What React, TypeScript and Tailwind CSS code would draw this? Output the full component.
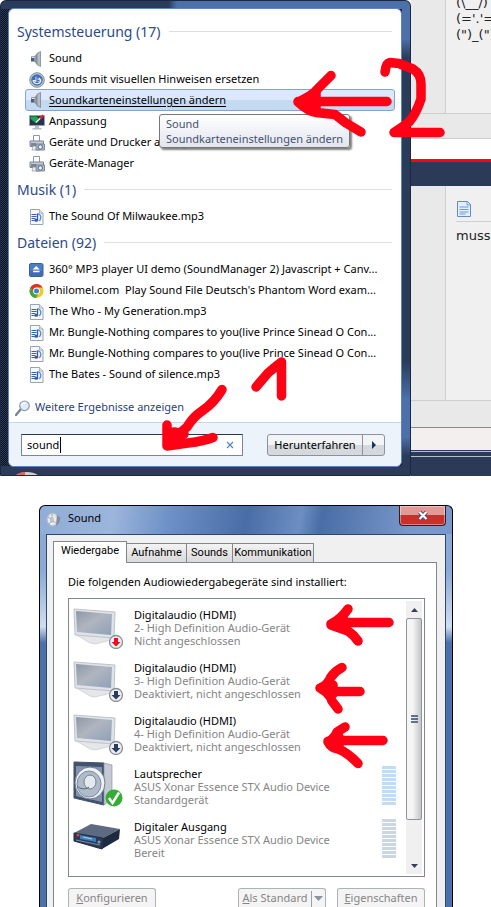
import type { ReactNode } from 'react';

type ResultIcon = 'speaker' | 'clock' | 'monitor' | 'printer' | 'audio' | 'shockwave' | 'chrome';

interface Result {
  icon: ResultIcon;
  label: string;
  selected?: boolean;
}

const sections: { title: string; items: Result[] }[] = [
  {
    title: 'Systemsteuerung (17)',
    items: [
      { icon: 'speaker', label: 'Sound' },
      { icon: 'clock', label: 'Sounds mit visuellen Hinweisen ersetzen' },
      { icon: 'speaker', label: 'Soundkarteneinstellungen ändern', selected: true },
      { icon: 'monitor', label: 'Anpassung' },
      { icon: 'printer', label: 'Geräte und Drucker anzeigen' },
      { icon: 'printer', label: 'Geräte-Manager' },
    ],
  },
  {
    title: 'Musik (1)',
    items: [{ icon: 'audio', label: 'The Sound Of Milwaukee.mp3' }],
  },
  {
    title: 'Dateien (92)',
    items: [
      { icon: 'shockwave', label: '360° MP3 player UI demo (SoundManager 2) Javascript + Canv...' },
      { icon: 'chrome', label: "Philomel.com  Play Sound File Deutsch's Phantom Word exam..." },
      { icon: 'audio', label: 'The Who - My Generation.mp3' },
      { icon: 'audio', label: 'Mr. Bungle-Nothing compares to you(live Prince Sinead O Con...' },
      { icon: 'audio', label: 'Mr. Bungle-Nothing compares to you(live Prince Sinead O Con...' },
      { icon: 'audio', label: 'The Bates - Sound of silence.mp3' },
    ],
  },
];

const devices = [
  { icon: 'tv', badge: 'unplugged', name: 'Digitalaudio (HDMI)', driver: '2- High Definition Audio-Gerät', state: 'Nicht angeschlossen' },
  { icon: 'tv', badge: 'disabled', name: 'Digitalaudio (HDMI)', driver: '3- High Definition Audio-Gerät', state: 'Deaktiviert, nicht angeschlossen' },
  { icon: 'tv', badge: 'disabled', name: 'Digitalaudio (HDMI)', driver: '4- High Definition Audio-Gerät', state: 'Deaktiviert, nicht angeschlossen' },
  { icon: 'box', badge: 'default', name: 'Lautsprecher', driver: 'ASUS Xonar Essence STX Audio Device', state: 'Standardgerät', meter: 'bg-[#c3dbf3]' },
  { icon: 'amp', badge: '', name: 'Digitaler Ausgang', driver: 'ASUS Xonar Essence STX Audio Device', state: 'Bereit', meter: 'bg-[#cad8e6]' },
];

const icons: Record<ResultIcon, ReactNode> = {
  speaker: (
    <>
      <path d="M2 5.500h4v5H2z" fill="#4d5d75" />
      <path d="M5 5.500 9 1.500v13l-4-4z" fill="#8f9aa8" />
      <path d="M8 2.500 11.500.5v15L8 13.500z" fill="#b4bcc6" stroke="#717c89" strokeWidth=".7" />
      <path d="M2.500 6.500h3" stroke="#dfe4ea" />
    </>
  ),
  clock: (
    <>
      <circle cx="8" cy="8" r="7.300" fill="#c5cbd4" stroke="#76818f" strokeWidth=".9" />
      <circle cx="8" cy="8" r="5.800" fill="#3f6fb6" />
      <path d="M3.500 8h3V5l1.500-1 1 3 1.500-1.500L12.500 8c0 2.800-2 4.300-4.500 4.300S3.500 10.800 3.500 8z" fill="#e6f0fc" />
      <path d="M8 4v5l2.500-1" stroke="#3465ae" strokeWidth="1.200" fill="none" />
      <path d="M5.500 9.500c1.500 1.500 3.500 1.500 5 0" stroke="#3465ae" fill="none" />
    </>
  ),
  monitor: (
    <>
      <path d="M.5 1.500h15v10H.5z" fill="#27344d" stroke="#98a2b3" />
      <path d="M1.500 2.500h6l3 3-4 3.500-5-4z" fill="#19a84c" />
      <path d="M7 8.500 13.500 2" stroke="#e8edf3" strokeWidth="1.500" />
      <path d="m11 4 3.500-2.500" stroke="#e02020" strokeWidth="2.200" />
      <path d="M6 12h4v2h2.500v1.500h-9V14H6z" fill="#b5bcc6" />
    </>
  ),
  printer: (
    <>
      <path d="M4.500.5h6v6h-6z" fill="#fff" stroke="#8e97a3" />
      <path d="M1 6h13.500v5.500H1z" fill="#c3c9d1" stroke="#7d8793" />
      <path d="M2 8h5v3H2z" fill="#7c8694" />
      <path d="M4 11h7v4H3z" fill="#eef2f7" stroke="#8e97a3" strokeWidth=".7" />
      <path d="M7 9h8.500v6H7z" fill="#b4bcc6" stroke="#6b7583" strokeWidth=".8" />
      <circle cx="11.300" cy="12" r="2.200" fill="#eaf3ff" stroke="#4c6791" />
    </>
  ),
  audio: (
    <>
      <path d="M1.500.5h9l3.500 3.500v11.500H1.500z" fill="#f5f8fc" stroke="#9aa3ae" />
      <path d="M10.500.5v3.500H14" fill="#dfe5ec" stroke="#9aa3ae" strokeWidth=".8" />
      <path d="M2.500 5.500h5M2.500 7.500h5M2.500 9.500h4M2.500 11.500h3" stroke="#3565ad" />
      <path d="M8.500 4.500v6.500" stroke="#2f5ea8" strokeWidth="1.300" />
      <ellipse cx="7.200" cy="11.300" rx="1.900" ry="1.500" fill="#2f5ea8" />
      <path d="M9 4.500c3.500 1.500 3.500 4.500 1.500 7.500" stroke="#5687c8" strokeWidth="1.300" fill="none" />
    </>
  ),
  shockwave: (
    <>
      <rect x=".5" y="1.500" width="13.500" height="13" rx="1.500" fill="#4d7dc4" stroke="#3a5f9c" />
      <path d="M1.500 9h11.500v5H1.500z" fill="#3f6bb0" />
      <path d="m7.200 4 3.500 3.500h-7z" fill="#fff" />
      <path d="M4 9.500h6.500" stroke="#fff" strokeWidth="1.500" />
    </>
  ),
  chrome: (
    <>
      <circle cx="7.500" cy="8" r="7" fill="#f7c91f" />
      <path d="M1.400 4.500A7 7 0 0 1 13.600 4.500H7.500L4.500 9.500z" fill="#dd3324" />
      <path d="M1.400 4.500A7 7 0 0 0 7 15l3-5.500-5.500 0z" fill="#3fa648" />
      <circle cx="7.500" cy="8" r="3.400" fill="#fff" />
      <circle cx="7.500" cy="8" r="2.500" fill="#3f7fd6" />
    </>
  ),
};

function SectionTitle({ children }: { children: ReactNode }) {
  return (
    <div className="flex h-8 items-center gap-2 pr-[9px] pb-0.5 pl-2">
      <h2 className="text-[14px] whitespace-nowrap text-[#2c4a86]">{children}</h2>
      <div className="h-px flex-1 bg-[#dedede]" />
    </div>
  );
}

function ResultRow({ item }: { item: Result }) {
  return (
    <a
      href="#"
      className={
        item.selected
          ? '-mt-px mr-1.5 ml-4 flex h-[22px] items-center gap-1 rounded-[3px] border border-[#84a3d4] bg-linear-to-b from-[#dce9fc] from-50% to-[#c4daf3] to-50% px-[3px] text-[11px] whitespace-pre text-black underline underline-offset-2'
          : 'mr-1.5 ml-[17px] flex h-[21px] items-center gap-1 px-[3px] text-[11px] whitespace-pre text-black'
      }
    >
      <svg className="h-4 w-4 shrink-0" viewBox="0 0 16 16">{icons[item.icon]}</svg>
      {item.label}
    </a>
  );
}

function StartMenu() {
  return (
    <div className="relative w-[411px] shrink-0 rounded-t-md border border-[#1b2743] pt-[7px] pr-2 pb-2 pl-[7px] [background:linear-gradient(#4b70aa_8%,#2b3b5a_12%,#2b3b5a_76%,#4b70aa_84%,#4b70aa_92%,#2b3b5a_96%)_right/8px_100%_no-repeat,linear-gradient(90deg,#2b3b5a_41%,#4b70aa_43%)_top/100%_8px_no-repeat,linear-gradient(#2b3b5a,#2b3b5a)_bottom/100%_9px_no-repeat,repeating-conic-gradient(#0b101c_0_25%,#2b3b5a_0_50%)_left/2px_2px]">
      <div className="overflow-hidden rounded-md border border-[#5f84bf] bg-white">
        <div className="pt-[7px]">
          {sections.map((section) => (
            <section key={section.title}>
              <SectionTitle>{section.title}</SectionTitle>
              {section.items.map((item, i) => (
                <ResultRow key={i} item={item} />
              ))}
            </section>
          ))}
          <a href="#" className="flex h-[37px] items-center gap-1 pt-2 pl-[6px] text-[11px] text-[#1f3f7d]">
            <svg className="h-4 w-4" viewBox="0 0 16 16">
              <path d="m1 15 5-6" stroke="#77828f" strokeWidth="2.200" strokeLinecap="round" />
              <circle cx="9.500" cy="5.800" r="4.800" fill="#dcecfb" stroke="#8b98a8" strokeWidth="1.200" />
              <path d="M6.500 5.500c.5-2 2-2.500 3.500-2.500" stroke="#fff" strokeWidth="1.300" fill="none" />
            </svg>
            Weitere Ergebnisse anzeigen
          </a>
        </div>
        <div className="flex items-center justify-between border-t border-[#c3d8e4] bg-[#edf3fb] pt-[11px] pr-4 pb-[10px] pl-3">
          <label className="flex h-[22px] w-[222px] items-center border border-[#7e8694] border-t-[#2c3650] bg-white pr-2 pl-[5px]">
            <input aria-label="Programme/Dateien durchsuchen" defaultValue="sound" className="w-full min-w-0 text-[11px] text-black outline-none" />
            <button aria-label="Suche löschen" className="shrink-0">
              <svg className="h-2 w-2" viewBox="0 0 8 8">
                <path d="m1 1 6 6M7 1 1 7" stroke="#5484bd" strokeWidth="1.200" />
              </svg>
            </button>
          </label>
          <div className="flex h-[22px] w-[118px] overflow-hidden rounded-[3px] border border-[#8c929b] bg-linear-to-b from-[#f3f4f6] from-50% to-[#d5d8dd] to-50% text-[11px] text-black">
            <button className="flex-1 border-r border-[#8c929b]">Herunterfahren</button>
            <button aria-label="Weitere Optionen" className="flex w-[21px] items-center justify-center">
              <svg className="h-2 w-1" viewBox="0 0 4 8">
                <path d="M0 0v8l4-4z" fill="#1d2f52" />
              </svg>
            </button>
          </div>
        </div>
      </div>

      {/* text caret behind the typed term */}
      <div className="absolute top-[436px] left-[59px] h-4 w-px bg-black" />

      <div role="tooltip" className="absolute top-[113px] left-[158px] w-[191px] rounded-[3px] border border-[#767676] bg-linear-to-b from-white to-[#e3e5ef] px-1.5 py-px text-[11px] leading-[15px] whitespace-nowrap text-[#44526e] shadow-[2px_2px_2px_#808080]">
        Sound
        <br />
        Soundkarteneinstellungen ändern
      </div>

      <svg className="absolute bottom-0 left-[15px] h-[3px] w-[22px]" viewBox="0 0 22 3">
        <path d="M0 3c6-4 16-4 22 0z" fill="#cfcfcf" />
        <path d="M0 3c3-2 6-3 9-3v3z" fill="#d86464" />
      </svg>

      <svg className="pointer-events-none absolute -top-px -left-px z-10 h-[475px] w-[460px]" viewBox="0 0 460 475" fill="none" stroke="#ff0014" strokeWidth="9.500" strokeLinecap="round" strokeLinejoin="round">
        <path d="M387 101.500H298M331 75.500 317 89.500Q313 95 298 102Q309 112 316 112.500L335 114.500 346 123 361 132" />
        <path d="M385 72Q386 63 390 62.500L399 63.500 413 69Q421 74 421 84V99Q416 114 409 122Q401 128 394 132.500H440" />
        <path d="M301 102 316 93V110z" fill="#ff0014" />
        <path d="M222 389.500Q214 403 202 411Q193 417 187 427L167 444M167 425 167 446 188 443Q204 441 213 437.500" />
        <path d="M169 444 174 432 184 434z" fill="#ff0014" />
        <path d="M256 387 268 373Q275 367 281.500 362V396" />
      </svg>
    </div>
  );
}

function ForumPage() {
  return (
    <div className="flex min-w-0 flex-1 flex-col overflow-hidden bg-[#2b3a57] font-['DejaVu_Sans',Verdana,sans-serif] text-[13px] text-[#222]">
      <div className="flex h-[114px] border-b border-[#cfcfcf] bg-[#e9e9e9]">
        <div className="ml-[34px] flex-1 border-l border-[#cfcfcf] bg-[#f0f0f0] pl-[10px] leading-4 whitespace-pre">
          <div className="-mt-[5px]">{'(\\__/)\n(=\'.\'=)\n(")_(")'}</div>
        </div>
      </div>
      <div className="h-[25px] border-b border-[#cfcfcf] bg-[#e9e9e9]" />
      <div className="h-[23px] border-b-[3px] border-[#ff0014] bg-white" />
      <div className="h-6" />
      <div className="flex h-[215px] border-b border-[#cfcfcf] bg-[#e9e9e9]">
        <div className="ml-[34px] flex-1 border-l border-[#cfcfcf] bg-[#f0f0f0] pt-[14px] pl-[10px]">
          <svg className="h-[18px] w-4" viewBox="0 0 16 18">
            <path d="M1.500 1.500h10l3 3v12h-13z" fill="#e4effb" stroke="#5d8cc7" />
            <path d="M11 1.500V5h3.500" fill="none" stroke="#5d8cc7" strokeWidth=".8" />
            <path d="M3.500 7h9M3.500 9.500h9M3.500 12h9M3.500 14h6" stroke="#6e9ad2" strokeWidth="1.200" />
          </svg>
          <div className="mt-[3px] border-t border-[#cfcfcf] pt-[6px] leading-4">muss</div>
        </div>
      </div>
      <div className="h-[27px] border-b border-[#8a8a8a] bg-[#e9e9e9]" />
      <div className="h-[22px] bg-[#f3efee]" />
      <div className="mt-px h-px bg-[#b8bfca]" />
      <div className="mt-1 h-px bg-[#b8bfca]" />
      <div className="flex-1" />
    </div>
  );
}

function DeviceIcon({ icon, badge }: { icon: string; badge: string }) {
  return (
    <svg className="h-12 w-[52px] shrink-0" viewBox="0 0 52 48">
      <defs>
        <linearGradient id="screen" x2="1" y2="1">
          <stop stopColor="#8d97a5" />
          <stop offset=".45" stopColor="#b0b6c0" />
          <stop offset="1" stopColor="#8f9fb8" />
        </linearGradient>
      </defs>
      {icon === 'tv' && (
        <>
          <path d="m2 33 4-2 34 5-2 3-16 4-5-1z" fill="#e4e6ea" stroke="#c5c9cf" strokeWidth=".7" />
          <path d="m1 8 41 3-1 26L2 34z" fill="#dfe2e6" stroke="#bfc4ca" />
          <path d="m3 10 36 3-1 21L4 31z" fill="url(#screen)" />
        </>
      )}
      {icon === 'box' && (
        <>
          <path d="m1 2 30 1v42L1 38z" fill="#42536f" stroke="#42506a" />
          <path d="m31 3 8 2v34l-8 6z" fill="#c3cad4" stroke="#8993a3" strokeWidth=".7" />
          <path d="m3 6 26 1v35L3 36z" fill="#8493ab" />
          <ellipse cx="17" cy="23" rx="15" ry="16" fill="#eef1f5" stroke="#717d90" />
          <ellipse cx="16" cy="24" rx="12" ry="13" fill="#b0bac9" stroke="#808c9f" />
          <ellipse cx="17" cy="22" rx="6" ry="7" fill="#e4e9f0" stroke="#75818f" />
          <path d="M4 26c3 3 8 4 12 1" stroke="#53637c" fill="none" />
        </>
      )}
      {icon === 'amp' && (
        <>
          <path d="m1 20 17-9 29 5-17 9z" fill="#5d6a82" />
          <path d="m30 25 17-9-1 10-17 10z" fill="#1e2a40" />
          <path d="m1 20 29 5-1 11L1 28z" fill="#2b3a57" stroke="#1f2a3e" />
          <path d="m7 22 16 3v4L7 26z" fill="#3c82bd" />
          <path d="m10 24 9 2" stroke="#a9d4f0" />
          <circle cx="5" cy="22" r="1.500" fill="#e23c3c" />
          <path d="m3 27 24 5" stroke="#7b8aa5" />
          <circle cx="26" cy="29" r="1.500" fill="#8b99b1" />
        </>
      )}
      {(badge === 'unplugged' || badge === 'disabled') && (
        <g transform="translate(43 41)">
          <circle r="6.500" fill="#eceef1" stroke="#8a9099" strokeWidth="1.300" />
          <path d="M-2-4h4v4h2.500L0 4.500-4.500 0H-2z" fill={badge === 'unplugged' ? '#e8101c' : '#2a3b5c'} />
        </g>
      )}
      {badge === 'default' && (
        <g transform="translate(41 38)">
          <circle r="8.500" fill="#35ad35" />
          <path d="m-5 0 3.500 5L5-5.500" stroke="#fff" strokeWidth="2.500" fill="none" />
        </g>
      )}
    </svg>
  );
}

function SoundDialog() {
  return (
    <div className="relative mt-[29px] mr-[38px] ml-[39px] rounded-t-md border border-b-0 border-black px-1.5 text-[11px] text-black [background:linear-gradient(100deg,#8fadd8_0%,#9bb5dc_18%,#6c8fc6_32%,#496da6_50%,#6c8ec3_63%,#496da6_68%,#7898cb_90%)_top/100%_28px_no-repeat,linear-gradient(#8aa9d6_0,#8aa9d6_16%,#cfdef0_30%,#4b70aa_34%)]">
      <div className="flex h-7 items-center gap-1.5 pb-1">
        <svg className="mt-1 h-4 w-4" viewBox="0 0 16 16">
          <ellipse cx="6.500" cy="7.500" rx="5.500" ry="6.500" fill="#dfe3e8" stroke="#b3b9c2" />
          <ellipse cx="6" cy="8" rx="3" ry="3.800" fill="#c2c8cf" stroke="#fff" />
          <path d="M6 1.500v4M2 5l3 2M3 12l2-2.500M9.500 11l-2-2" stroke="#8e96a1" strokeWidth=".8" />
          <path d="m11 3 3.500 3-1.500 5-3 3z" fill="#848c98" />
        </svg>
        <h1 className="mt-px flex-1 text-[11px]">Sound</h1>
        <button aria-label="Schließen" className="flex h-5 w-[47px] items-center justify-center self-start rounded-b-[4px] border border-t-0 border-[#331a2b] bg-linear-to-b from-[#e39a97] from-50% to-[#c9302b] to-50% ring-1 ring-white/40 ring-inset">
          <svg className="h-[11px] w-3" viewBox="0 0 12 11">
            <path d="m2.500 2 7 7M9.500 2l-7 7" stroke="#4a4f66" strokeWidth="4" />
            <path d="m2.500 2 7 7M9.500 2l-7 7" stroke="#fff" strokeWidth="2.200" />
          </svg>
        </button>
      </div>
      <div className="border border-b-0 border-[#30466b] bg-[#f0f0f0] px-1.5 pt-1.5">
        <div role="tablist" className="flex items-end font-[Roboto,sans-serif]">
          <button role="tab" aria-selected="true" className="relative -mb-px h-[22px] w-[74px] border border-b-0 border-[#82868f] bg-white pb-0.5">Wiedergabe</button>
          <button role="tab" className="h-[19px] w-[60px] border border-b-0 border-l-0 border-[#82868f] bg-linear-to-b from-[#f3f3f3] to-[#dadada]">Aufnahme</button>
          <button role="tab" className="h-[19px] w-[46px] border border-b-0 border-l-0 border-[#82868f] bg-linear-to-b from-[#f3f3f3] to-[#dadada]">Sounds</button>
          <button role="tab" className="h-[19px] w-[81px] border border-b-0 border-l-0 border-[#82868f] bg-linear-to-b from-[#f3f3f3] to-[#dadada]">Kommunikation</button>
        </div>
        <div className="mr-0.5 border border-b-0 border-[#82868f] bg-white px-[11px] pt-[11px] pl-[14px]">
          <p className="leading-4">Die folgenden Audiowiedergabegeräte sind installiert:</p>
          <div className="mt-2 flex h-[279px] border border-[#82868f] p-0.5">
            <ul className="flex-1">
              {devices.map((device, i) => (
                <li key={i} className="flex h-[53px] items-start gap-[9px] pl-0.5">
                  <DeviceIcon icon={device.icon} badge={device.badge} />
                  <div className="flex-1 pt-[7px] leading-[13px] whitespace-nowrap text-[#858585]">
                    <div className="text-black">{device.name}</div>
                    <div>{device.driver}</div>
                    <div>{device.state}</div>
                  </div>
                  {device.meter && (
                    <div className="mt-1.5 mr-[10px] flex w-3.5 flex-col gap-px">
                      {Array.from({ length: 10 }, (_, bar) => (
                        <div key={bar} className={`h-[3px] ${device.meter}`} />
                      ))}
                    </div>
                  )}
                </li>
              ))}
            </ul>
            <div className="flex w-4 flex-col bg-[#f0f0f0]">
              <button aria-label="Nach oben" className="flex h-[17px] items-center justify-center">
                <svg className="h-1 w-[7px]" viewBox="0 0 7 4"><path d="M0 4h7L3.500 0z" fill="#33405a" /></svg>
              </button>
              <div className="flex h-[202px] flex-col items-center justify-center gap-px rounded-[2px] border border-[#8f949b] bg-linear-to-r from-[#f5f5f5] from-40% to-[#c4c6c9]">
                <div className="h-0.5 w-[7px] bg-[#64718b]" />
                <div className="h-0.5 w-[7px] bg-[#64718b]" />
                <div className="h-0.5 w-[7px] bg-[#64718b]" />
              </div>
              <div className="flex-1" />
              <button aria-label="Nach unten" className="flex h-[17px] items-center justify-center">
                <svg className="h-1 w-[7px]" viewBox="0 0 7 4"><path d="M0 0h7L3.500 4z" fill="#33405a" /></svg>
              </button>
            </div>
          </div>
          <div className="mt-[11px] flex gap-[11px] text-[#858585]">
            <button className="mr-auto h-5 w-[88px] rounded-t-[3px] border border-b-0 border-[#adb2b5] bg-[#f4f4f4]"><u>K</u>onfigurieren</button>
            <div className="flex h-5 w-[88px] items-center rounded-t-[3px] border border-b-0 border-[#adb2b5] bg-[#f4f4f4]">
              <button className="flex-1 whitespace-nowrap"><u>A</u>ls Standard</button>
              <button aria-label="Standard auswählen" className="flex h-4 w-[14px] items-center justify-center border-l border-[#9a9fa5]">
                <svg className="h-[5px] w-[9px]" viewBox="0 0 9 5"><path d="M0 0h9L4.500 5z" fill="#8a93a0" /></svg>
              </button>
            </div>
            <button className="h-5 w-[88px] rounded-t-[3px] border border-b-0 border-[#adb2b5] bg-[#f4f4f4]"><u>E</u>igenschaften</button>
          </div>
        </div>
      </div>

      <svg className="pointer-events-none absolute -top-px -left-px h-[403px] w-[414px]" viewBox="39 504 414 403" fill="none" stroke="#ff0014" strokeWidth="9.500" strokeLinecap="round" strokeLinejoin="round">
        <path d="M389 621.500H345L331 623Q341 618 348 608M331 624 348 630Q354 634 358 640" />
        <path d="M360 690.500H335L320 687Q327 685 331 676Q335 670 342 666.500M320 687Q330 693 332 700L338 708" />
        <path d="M383 739.500H340L328 740.500Q334 738 337 731L345 726M328 741Q331 747 338 748Q347 751 358 762.500" />
        <path d="m333 623 11-4v8zM323 687l10-3v9zM331 741l8-5v9z" fill="#ff0014" />
      </svg>
    </div>
  );
}

export default function App() {
  return (
    <main className="min-h-screen overflow-hidden bg-white font-['Noto_Sans','Open_Sans',sans-serif]">
      <div className="flex">
        <StartMenu />
        <ForumPage />
      </div>
      <SoundDialog />
    </main>
  );
}
